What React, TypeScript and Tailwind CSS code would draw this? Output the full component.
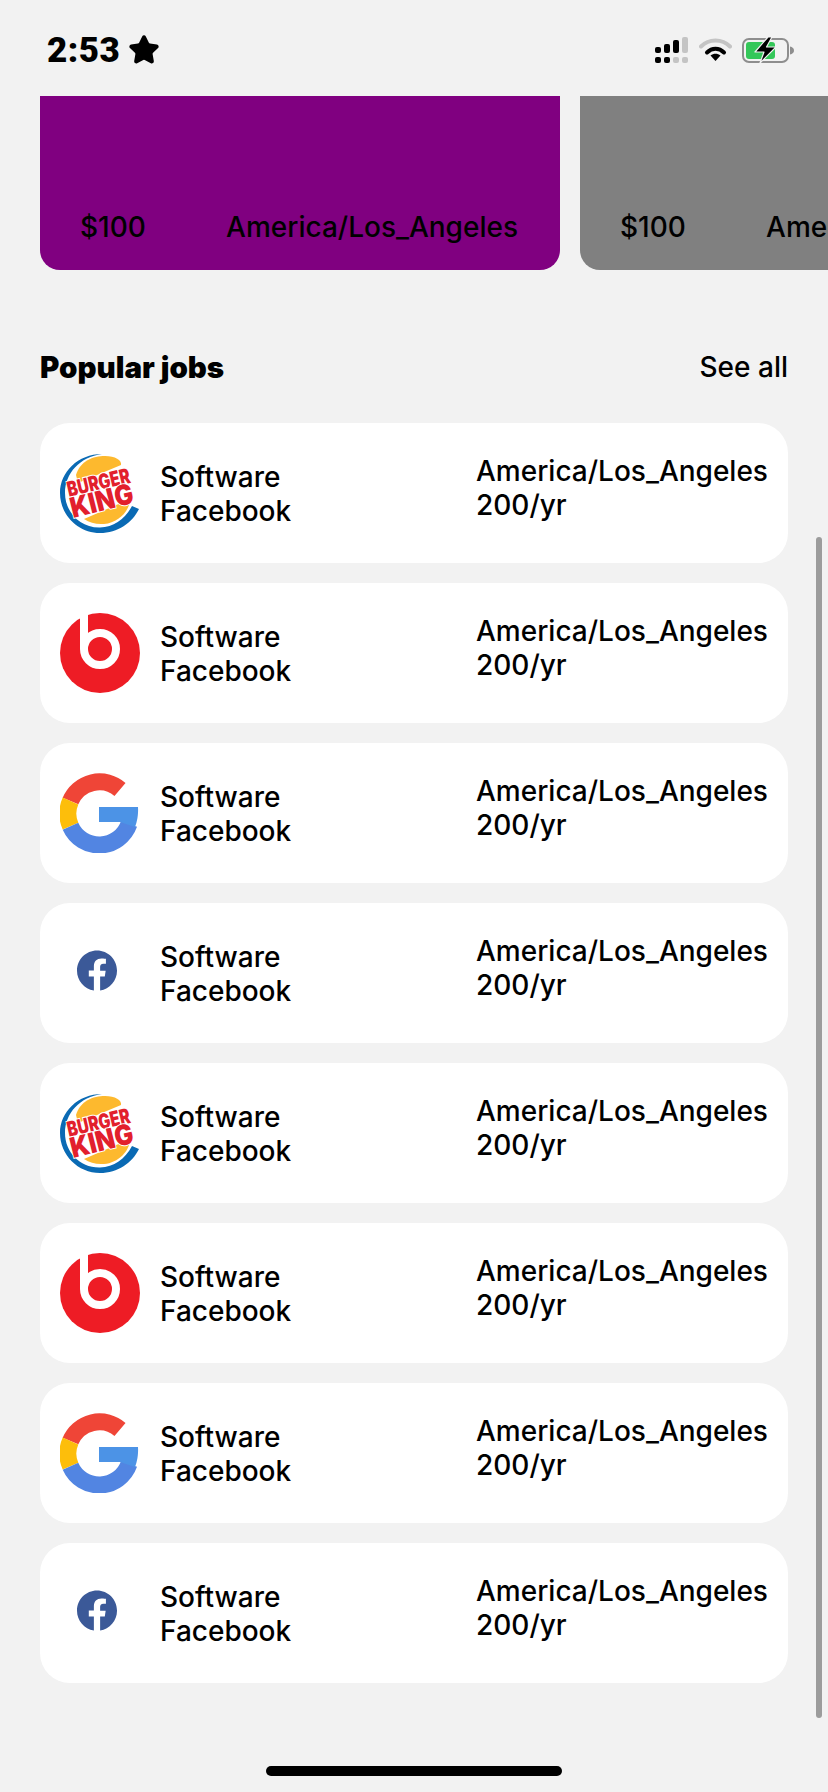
import { Star } from "lucide-react";

const font = "font-['Inter','Liberation_Sans',sans-serif]";

function SignalIcon() {
  return (
    <svg width="33" height="26" viewBox="0 0 33 26">
      <rect x="0" y="10" width="6" height="6" rx="2" fill="#000" />
      <rect x="9" y="7" width="6" height="9" rx="2" fill="#000" />
      <rect x="18" y="3" width="6" height="13" rx="2" fill="#000" />
      <rect x="27" y="0" width="6" height="16" rx="2" fill="#c4c4c4" />
      <rect x="0" y="20" width="6" height="6" rx="2" fill="#000" />
      <rect x="9" y="20" width="6" height="6" rx="2" fill="#000" />
      <rect x="18" y="20" width="6" height="6" rx="2" fill="#c4c4c4" />
      <rect x="27" y="20" width="6" height="6" rx="2" fill="#c4c4c4" />
    </svg>
  );
}

function WifiIcon() {
  return (
    <svg className="-mt-0.5" width="33" height="24" viewBox="0 0 33 24" fill="none">
      <path d="M2 9.5C10 1.5 23 1.5 31 9.5" stroke="#c4c4c4" strokeWidth="4" strokeLinecap="round" />
      <path d="M8 15.5C13 10.5 20 10.5 25 15.5" stroke="#000" strokeWidth="4" strokeLinecap="round" />
      <path d="M11.5 18.5C14.5 16.2 18.5 16.2 21.5 18.5L16.5 24Z" fill="#000" />
    </svg>
  );
}

function BatteryIcon() {
  return (
    <svg width="52" height="26" viewBox="0 0 52 26" fill="none">
      <rect x="1" y="2" width="45" height="23" rx="6" stroke="#8e8e8e" strokeWidth="2" />
      <rect x="4" y="5" width="29" height="17" rx="3" fill="#34c759" />
      <path d="M48 9.5C50.5 10 52 11.5 52 13.5C52 15.5 50.5 17 48 17.5Z" fill="#8e8e8e" />
      <path
        d="M26 0L13 15H22L18 26L34 10H24.5L30 0Z"
        fill="#000"
        stroke="#f2f2f2"
        strokeWidth="1.2"
        strokeLinejoin="round"
      />
    </svg>
  );
}

function BurgerKingLogo() {
  return (
    <svg width="80" height="80" viewBox="0 0 80 80">
      <path d="M16 22C20 8 33 3 45 3C55 3 62 7 61 12L18 30Z" fill="#fdb92e" />
      <path d="M24 66L70 46C70 58 58 70 44 71C36 71.5 30 70 24 66Z" fill="#fdb92e" />
      <path
        d="M42 1C18 1 0 19 0 40C0 62 18 80 40 80C58 80 72 70 79 56L72 53C65 66 54 74 40 74.5C20 75 5 59 5 40C5 20 20 4 42 1Z"
        fill="#0a6ab4"
      />
      <text
        transform="translate(9 44) rotate(-13)"
        fontFamily="Inter, sans-serif"
        fontWeight="900"
        fontSize="21"
        fill="#e2202c"
        stroke="#fff"
        strokeWidth="2"
        paintOrder="stroke"
        textLength="64"
        lengthAdjust="spacingAndGlyphs"
      >
        BURGER
      </text>
      <text
        transform="translate(13 65) rotate(-14)"
        fontFamily="Inter, sans-serif"
        fontWeight="900"
        fontSize="28"
        fill="#e2202c"
        stroke="#fff"
        strokeWidth="2"
        paintOrder="stroke"
        textLength="64"
        lengthAdjust="spacingAndGlyphs"
      >
        KING
      </text>
    </svg>
  );
}

function BeatsLogo() {
  return (
    <svg width="80" height="80" viewBox="0 0 80 80">
      <circle cx="40" cy="40" r="40" fill="#ee1c25" />
      <rect x="20" y="0" width="8" height="36" fill="#fff" />
      <circle cx="40" cy="36" r="16" fill="none" stroke="#fff" strokeWidth="8" />
    </svg>
  );
}

function GoogleLogo() {
  return (
    <svg width="80" height="80" viewBox="0 0 80 80" fill="none">
      <path d="M60 16.5A31.5 31.5 0 0 0 10.5 28" stroke="#ef4537" strokeWidth="17" />
      <path d="M10.5 28A31.5 31.5 0 0 0 10.5 53.2" stroke="#fdbe0b" strokeWidth="17" />
      <path d="M10.5 53.2A31.5 31.5 0 0 0 69 51" stroke="#5285e2" strokeWidth="17" />
      <path d="M39 34H78C78.5 42 77 49 75 54L60 49H39Z" fill="#4c93e6" />
    </svg>
  );
}

function FacebookLogo() {
  return (
    <svg width="80" height="80" viewBox="0 0 80 80">
      <g transform="translate(17 17.5) scale(1.667)">
        <path
          d="M24 12.073c0-6.627-5.373-12-12-12s-12 5.373-12 12c0 5.99 4.388 10.954 10.125 11.854v-8.385H7.078v-3.47h3.047V9.43c0-3.007 1.792-4.669 4.533-4.669 1.312 0 2.686.235 2.686.235v2.953H15.83c-1.491 0-1.956.925-1.956 1.874v2.25h3.328l-.532 3.47h-2.796v8.385C19.612 23.027 24 18.062 24 12.073z"
          fill="#3b5998"
        />
      </g>
    </svg>
  );
}

const logos = [BurgerKingLogo, BeatsLogo, GoogleLogo, FacebookLogo, BurgerKingLogo, BeatsLogo, GoogleLogo, FacebookLogo];

function JobRow({ Logo }: { Logo: () => React.ReactElement }) {
  return (
    <div className="flex h-[140px] items-center rounded-[30px] bg-white pr-5 pl-5 text-[28px] leading-[34px] font-medium text-black">
      <div className="h-20 w-20 flex-none">
        <Logo />
      </div>
      <div className="mt-[2px] ml-5 flex-1">
        <div>Software</div>
        <div>Facebook</div>
      </div>
      <div className="mb-2.5 w-[292px] flex-none whitespace-nowrap">
        <div>America/Los_Angeles</div>
        <div>200/yr</div>
      </div>
    </div>
  );
}

function FeaturedCard({ color }: { color: string }) {
  return (
    <div className={`flex h-full w-[520px] flex-none items-end justify-between rounded-b-[20px] pr-[42px] pb-[26px] pl-10 text-[28px] leading-[34px] font-medium text-black ${color}`}>
      <span>$100</span>
      <span className="whitespace-nowrap">America/Los_Angeles</span>
    </div>
  );
}

export default function App() {
  return (
    <div className={`relative h-[1792px] w-[828px] overflow-hidden bg-[#f2f2f2] ${font}`}>
      <div className="flex h-[96px] items-center justify-between pt-1 pr-[34px] pl-[47px]">
        <div className="flex items-center gap-2 text-black">
          <span className="font-['Roboto',sans-serif] text-[35px] leading-none font-black tracking-[0.5px]">2:53</span>
          <Star className="h-[32px] w-[32px] fill-black text-black" strokeWidth={2} />
        </div>
        <div className="flex items-center gap-[10px]">
          <div className="mr-px flex">
            <SignalIcon />
          </div>
          <WifiIcon />
          <BatteryIcon />
        </div>
      </div>

      <div className="flex h-[174px] gap-5 pl-10">
        <FeaturedCard color="bg-[#800080]" />
        <FeaturedCard color="bg-[#808080]" />
      </div>

      <div className="mt-[80px] flex items-center justify-between pr-[40px] pl-10 text-black">
        <h2 className="text-[29.5px] leading-[34px] font-black">Popular jobs</h2>
        <span className="text-[28px] leading-[34px] font-medium">See all</span>
      </div>

      <div className="mt-[39px] flex flex-col gap-5 pr-10 pl-10">
        {logos.map((Logo, i) => (
          <JobRow key={i} Logo={Logo} />
        ))}
      </div>

      {/* scroll indicator + home bar sit on top of the list */}
      <div className="absolute top-[537px] left-[816px] h-[1181px] w-[6px] rounded-full bg-[#9c9c9c]" />
      <div className="absolute top-[1766px] left-[266px] h-[10px] w-[296px] rounded-full bg-black" />
    </div>
  );
}
